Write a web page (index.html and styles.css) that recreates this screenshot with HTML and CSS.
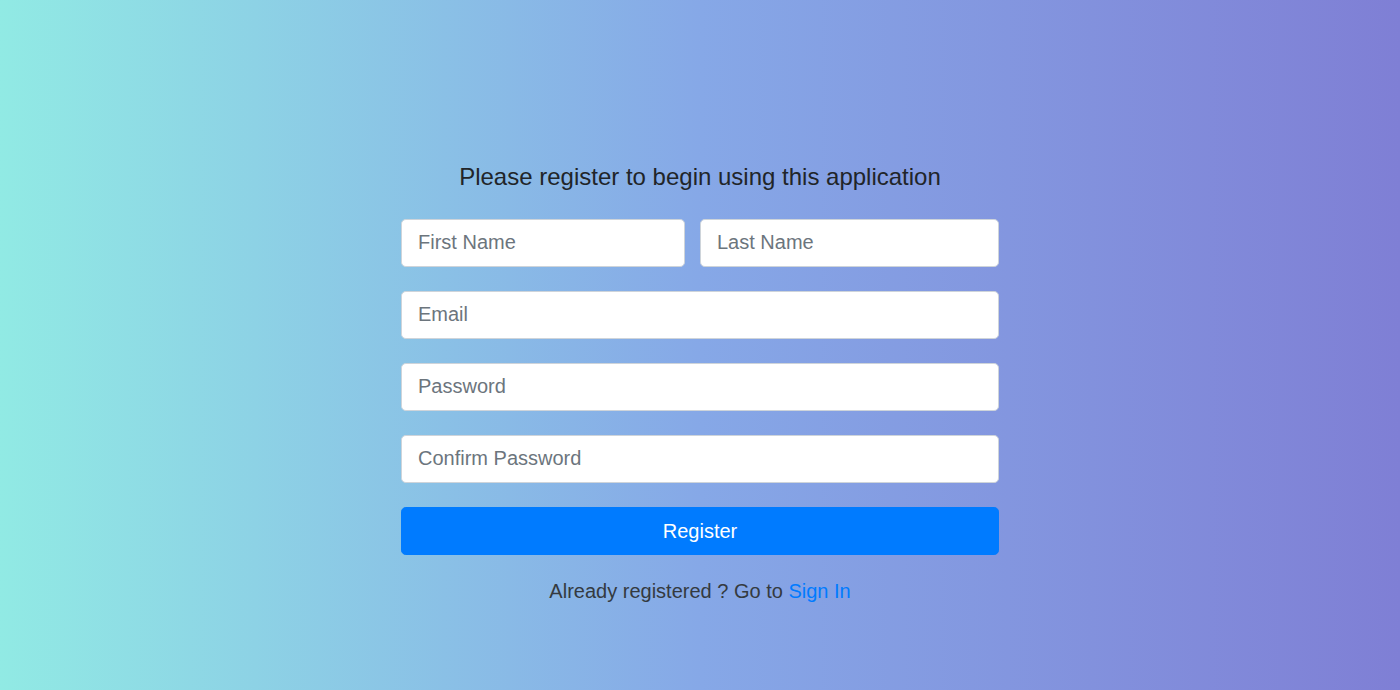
FILE: index.html
```html
<!DOCTYPE html>
<html lang="en">
<head>
<meta charset="utf-8">
<title>Register</title>
<link rel="stylesheet" href="styles.css">
</head>
<body>
<main class="page">
  <form class="register">
    <h4 class="title">Please register to begin using this application</h4>
    <div class="name-row">
      <input class="field" type="text" placeholder="First Name">
      <input class="field" type="text" placeholder="Last Name">
    </div>
    <input class="field" type="email" placeholder="Email">
    <input class="field" type="password" placeholder="Password">
    <input class="field" type="password" placeholder="Confirm Password">
    <button class="btn" type="button">Register</button>
    <p class="signin">Already registered ? Go to <a href="#" class="link">Sign In</a></p>
  </form>
</main>
</body>
</html>
```
FILE: styles.css
```css
html, body {
  margin: 0;
  height: 100%;
}
body {
  background: linear-gradient(to right, #91EAE4, #86A8E7, #7F7FD5);
  font-family: "Liberation Sans", Arial, sans-serif;
  color: #212529;
}
.page {
  padding-top: 162px;
}
.register {
  width: 598px;
  margin: 0 auto;
  display: flex;
  flex-direction: column;
}
.title {
  margin: 0 0 28px;
  font-size: 24px;
  font-weight: 400;
  line-height: 29px;
  text-align: center;
  color: #212529;
}
.name-row {
  display: grid;
  grid-template-columns: 284px 299px;
  column-gap: 15px;
}
.field {
  box-sizing: border-box;
  height: 48px;
  width: 100%;
  margin: 0 0 24px;
  padding: 7px 16px 9px;
  line-height: 30px;
  border: 1px solid #ced4da;
  border-radius: 4.8px;
  background: #fff;
  font-family: inherit;
  font-size: 20px;
  color: #495057;
  outline: none;
}
.field::placeholder {
  color: #6c757d;
  opacity: 1;
}
.btn {
  height: 48px;
  border: 1px solid #007bff;
  border-radius: 4.8px;
  background: #007bff;
  color: #fff;
  font-family: inherit;
  font-size: 20px;
  cursor: pointer;
}
.signin {
  margin: 21px 0 0;
  font-size: 20px;
  line-height: 30px;
  text-align: center;
  color: #343a40;
}
.link {
  color: #007bff;
  text-decoration: none;
}
```
